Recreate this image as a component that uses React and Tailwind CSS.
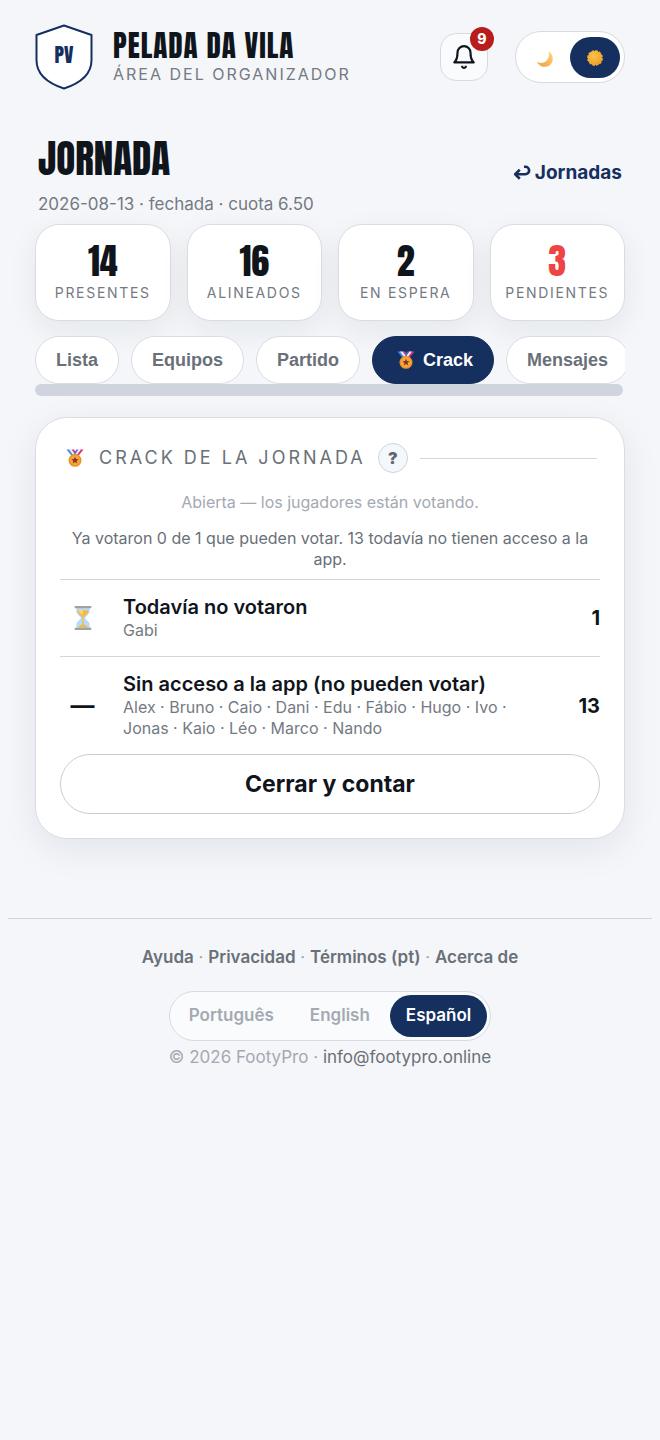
import React from 'react';

const stats = [
  { label: 'Presentes', value: 14 },
  { label: 'Alineados', value: 16 },
  { label: 'En espera', value: 2 },
  { label: 'Pendientes', value: 3, alert: true },
];

const groups = [
  { title: 'Todavía no votaron', names: ['Gabi'], count: 1, waiting: true },
  {
    title: 'Sin acceso a la app (no pueden votar)',
    names: ['Alex', 'Bruno', 'Caio', 'Dani', 'Edu', 'Fábio', 'Hugo', 'Ivo', 'Jonas', 'Kaio', 'Léo', 'Marco', 'Nando'],
    count: 13,
  },
];

const links = ['Ayuda', 'Privacidad', 'Términos (pt)', 'Acerca de'];
const languages = ['Português', 'English', 'Español'];

const MedalIcon = () => (
  <svg viewBox="0 0 18 18" className="size-[18px] shrink-0" aria-hidden="true">
    <path d="M0.5 0.5 H4 L9 6.5 L6.5 8 Z" fill="#3f8ae8" />
    <path d="M3 0.5 H6 L10 5.5 L8 7 Z" fill="#f3f1fb" />
    <path d="M5.5 0.5 H8 L10.5 4 L9.5 6 Z" fill="#d8417f" />
    <path d="M17.5 0.5 H14 L9 6.5 L11.5 8 Z" fill="#d8316d" />
    <path d="M15 0.5 H12 L8.5 5.2 L10 7 Z" fill="#f3f1fb" />
    <path d="M12.5 0.5 H10.5 L8 4 L9 5.8 Z" fill="#4a6fe0" />
    <circle cx="9" cy="11.3" r="6.5" fill="#e8952b" />
    <circle cx="9" cy="11.3" r="5" fill="#f5a63c" />
    <path
      d="M9 7.7 L10 10.1 L12.6 10.3 L10.6 12 L11.2 14.5 L9 13.1 L6.8 14.5 L7.4 12 L5.4 10.3 L8 10.1 Z"
      fill="#8c3328"
    />
  </svg>
);

const MoonIcon = () => (
  <svg viewBox="0 0 18 18" className="mt-1 size-[18px]" aria-hidden="true">
    <defs>
      <linearGradient id="moon" x1="0" y1="1" x2="1" y2="0">
        <stop offset="0" stopColor="#ee9a45" />
        <stop offset="1" stopColor="#ffd874" />
      </linearGradient>
    </defs>
    <path d="M12.6 1.6 C16 3.6 17.8 8 16.2 12 C14.3 16.6 9 18 4.9 15.9 C3 14.9 1.6 13.3 1.2 11.7 C3.8 13.6 7.8 13.4 10.3 11 C12.9 8.5 13.7 5 12.6 1.6 Z" fill="url(#moon)" />
  </svg>
);

const SunIcon = () => (
  <svg viewBox="0 0 18 18" className="mt-0.5 size-[18px]" aria-hidden="true">
    <defs>
      <radialGradient id="sun" cx="0.4" cy="0.35" r="0.7">
        <stop offset="0" stopColor="#fbc64a" />
        <stop offset="1" stopColor="#ee9c27" />
      </radialGradient>
    </defs>
    <circle cx="9" cy="9" r="7" fill="#f0a02b" stroke="#f5ad38" strokeWidth="1.8" strokeDasharray="2.6 1.06" />
    <circle cx="9" cy="9" r="7.1" fill="url(#sun)" />
  </svg>
);

const HourglassIcon = () => (
  <svg viewBox="0 0 18 24" className="h-6 w-[18px]" aria-hidden="true">
    <path d="M2.3 2 H15.7 V5 C15.7 8.6 11.2 10.4 11.2 12 C11.2 13.6 15.7 15.4 15.7 19 V22 H2.3 V19 C2.3 15.4 6.8 13.6 6.8 12 C6.8 10.4 2.3 8.6 2.3 5 Z" fill="#b9dcf6" />
    <path d="M3.2 4.2 H14.8 C14.4 7.8 10.2 9.8 9.6 12 V18.6 C11.6 19 13.2 20 13.8 21.6 H4.2 C4.8 20 6.4 19 8.4 18.6 V12 C7.8 9.8 3.6 7.8 3.2 4.2 Z" fill="#f3b84a" />
    <path d="M4.4 4.2 H9 V8.8 C6.5 8 4.8 6.4 4.4 4.2 Z" fill="#fbd774" />
    <rect x="0.6" y="0" width="16.8" height="2.2" rx="0.8" fill="#a3a09e" />
    <rect x="0.6" y="21.8" width="16.8" height="2.2" rx="0.8" fill="#a3a09e" />
  </svg>
);

const BellIcon = () => (
  <svg
    viewBox="0 0 24 24"
    className="size-[26px]"
    fill="none"
    stroke="currentColor"
    strokeWidth="2"
    strokeLinecap="round"
    strokeLinejoin="round"
    aria-hidden="true"
  >
    <path d="M18 8A6 6 0 0 0 6 8c0 7-3 9-3 9h18s-3-2-3-9" />
    <path d="M13.73 21a2 2 0 0 1-3.46 0" />
  </svg>
);

const BackIcon = () => (
  <svg
    viewBox="0 0 18 16"
    className="h-4 w-[18px]"
    fill="none"
    stroke="currentColor"
    strokeWidth="2.6"
    strokeLinejoin="round"
    aria-hidden="true"
  >
    <path d="M11 1.8 H12.4 A3.7 3.7 0 0 1 12.4 9.3 H3" />
    <path d="M6.8 4.8 L2.2 9.3 L6.8 13.8" />
  </svg>
);

const tabs = [
  { label: 'Lista' },
  { label: 'Equipos' },
  { label: 'Partido' },
  { label: 'Crack', active: true },
  { label: 'Mensajes' },
];

const Header = () => (
  <header className="flex items-center px-[35px] pt-6">
    <div className="grid shrink-0 place-items-center">
      <svg viewBox="0 0 58 66" className="col-start-1 row-start-1 h-[66px] w-[58px]" aria-hidden="true">
        <path
          d="M29 1.5 L56.5 11 V36 C56.5 50 46 59 29 64.5 C12 59 1.5 50 1.5 36 V11 Z"
          fill="#fff"
          stroke="#152f5f"
          strokeWidth="2"
          strokeLinejoin="round"
        />
      </svg>
      <span className="z-10 col-start-1 row-start-1 pb-1 font-['Anton',sans-serif] text-xl leading-5 text-[#152f5f]">PV</span>
    </div>
    <div className="ml-5 min-w-0 flex-1">
      <p className="font-['Anton',sans-serif] text-[29px] leading-8 tracking-[1px] whitespace-nowrap uppercase">Pelada da Vila</p>
      <p className="mt-0.5 text-base leading-5 tracking-[2px] whitespace-nowrap text-[#747a82] uppercase">
        Área del organizador
      </p>
    </div>
    <button
      type="button"
      aria-label="Notificaciones"
      className="relative grid size-12 shrink-0 place-items-center rounded-2xl border border-[#d6dae3] bg-[#f9fbfd]"
    >
      <BellIcon />
      <span className="absolute -top-[7px] -right-[7px] grid size-6 place-items-center rounded-full bg-[#b91c1c] text-sm font-extrabold text-white">
        9
      </span>
    </button>
    <div className="ml-[27px] flex h-[52px] shrink-0 items-center rounded-full border border-[#d6dae3] bg-white px-1">
      <button type="button" aria-label="Oscuro" className="grid h-[41px] w-[50px] place-items-center rounded-full">
        <MoonIcon />
      </button>
      <button type="button" aria-label="Claro" className="grid h-[41px] w-[50px] place-items-center rounded-full bg-[#152f5f]">
        <SunIcon />
      </button>
    </div>
  </header>
);

const StatCard = ({ label, value, alert }) => (
  <div className="flex h-[97px] flex-col items-center rounded-3xl border border-[#d9dde3] bg-white pt-[15px] shadow-[0_10px_30px_rgba(16,28,32,0.07)]">
    <strong className={`font-['Anton',sans-serif] text-4xl leading-[42px] font-normal ${alert ? 'text-[#ef4444]' : ''}`}>
      {value}
    </strong>
    <span className="mt-px text-sm leading-5 tracking-[0.12em] whitespace-nowrap text-[#747a82] uppercase">{label}</span>
  </div>
);

const Tabs = () => (
  <nav className="mt-[15px]">
    <div className="flex gap-3 overflow-x-auto [scrollbar-width:none]">
      {tabs.map((tab) => (
        <button
          key={tab.label}
          type="button"
          className={`flex h-12 shrink-0 items-center gap-2 rounded-full border font-['Liberation_Sans',sans-serif] text-lg font-bold ${
            tab.active ? 'border-[#152f5f] bg-[#152f5f] pr-5 pl-6 text-white' : 'border-[#d9dde3] bg-white px-5 text-[#697078]'
          }`}
        >
          {tab.active && <MedalIcon />}
          {tab.label}
        </button>
      ))}
    </div>
    <div className="mr-0.5 h-3 rounded-full bg-[#cfd4df]"></div>
  </nav>
);

const GroupRow = ({ title, names, count, waiting }) => (
  <li className="flex items-center border-t border-[#d3d6dc] py-[15px]">
    <span className="flex w-[45px] shrink-0 justify-center text-2xl font-bold">{waiting ? <HourglassIcon /> : '—'}</span>
    <div className="ml-[18px] min-w-0 flex-1">
      <p className="text-xl leading-[25px] font-semibold">{title}</p>
      <p className="text-base leading-[21px] text-[#747a82]">{names.join(' · ')}</p>
    </div>
    <strong className="w-[72px] shrink-0 text-right text-xl font-bold">{count}</strong>
  </li>
);

const CrackCard = () => (
  <section className="mt-[21px] rounded-[32px] border border-[#d9dde3] bg-white p-6 shadow-[0_10px_36px_rgba(16,28,32,0.08)]">
    <div className="flex h-8 items-center pr-[3px] pl-1.5">
      <MedalIcon />
      <h2 className="ml-[15px] text-lg leading-6 tracking-[3px] whitespace-nowrap text-[#697078] uppercase">
        Crack de la jornada
      </h2>
      <button
        type="button"
        aria-label="Ayuda"
        className="ml-3 grid size-[30px] shrink-0 place-items-center rounded-full border border-[#cfd4df] bg-[#f4f7fb] text-base font-black text-[#5f666f]"
      >
        ?
      </button>
      <div className="ml-3 h-px flex-1 bg-[#d3d6dc]"></div>
    </div>
    <p className="mt-[18px] text-center text-base leading-[21px] text-[#a4a9b2]">Abierta — los jugadores están votando.</p>
    <p className="mt-[15px] mb-[9px] text-center text-base leading-[21px] text-[#697078]">
      Ya votaron 0 de 1 que pueden votar. 13 todavía no tienen acceso a la app.
    </p>
    <ul>
      {groups.map((group) => (
        <GroupRow key={group.title} {...group} />
      ))}
    </ul>
    <button type="button" className="h-[60px] w-full rounded-full border border-[#c9cdd4] bg-white text-[23px] font-bold">
      Cerrar y contar
    </button>
  </section>
);

const Footer = () => (
  <footer className="mx-2 mt-[79px] flex flex-col items-center border-t border-[#cfd4da] pt-7 text-[17px] leading-[21px] text-[#a4a9b2]">
    <p>
      {links.map((link, i) => (
        <React.Fragment key={link}>
          {i > 0 && ' · '}
          <a href="#" className="font-semibold text-[#697078]">{link}</a>
        </React.Fragment>
      ))}
    </p>
    <div className="mt-[23px] flex h-[50px] items-center gap-1 rounded-full border border-[#d6dae3] bg-[#f9fbfd] px-[3px]">
      {languages.map((lang) => (
        <button
          key={lang}
          type="button"
          className={`h-[42px] rounded-full px-4 pb-0.5 font-semibold ${lang === 'Español' ? 'bg-[#152f5f] text-white' : ''}`}
        >
          {lang}
        </button>
      ))}
    </div>
    <p className="mt-1.5">
      © 2026 FootyPro · <a href="#" className="text-[#697078]">info@footypro.online</a>
    </p>
  </footer>
);

const App = () => (
  <div className="min-h-screen bg-[#f4f6fa] font-['Inter',sans-serif] text-[#10151c]">
    <Header />
    <main className="px-[35px] pt-11">
      <div className="flex items-center justify-between px-[3px]">
        <div>
          <h1 className="font-['Anton',sans-serif] text-[39px] leading-[50px] font-normal uppercase">Jornada</h1>
          <p className="mt-2 text-[17px] leading-6 text-[#747a82]">2026-08-13 · fechada · cuota 6.50</p>
        </div>
        <a href="#" className="flex items-center gap-1 pb-1 text-[19px] font-bold text-[#152f5f]">
          <BackIcon />
          Jornadas
        </a>
      </div>
      <div className="mt-2 grid grid-cols-4 gap-4">
        {stats.map((stat) => (
          <StatCard key={stat.label} {...stat} />
        ))}
      </div>
      <Tabs />
      <CrackCard />
    </main>
    <Footer />
  </div>
);

export default App;
